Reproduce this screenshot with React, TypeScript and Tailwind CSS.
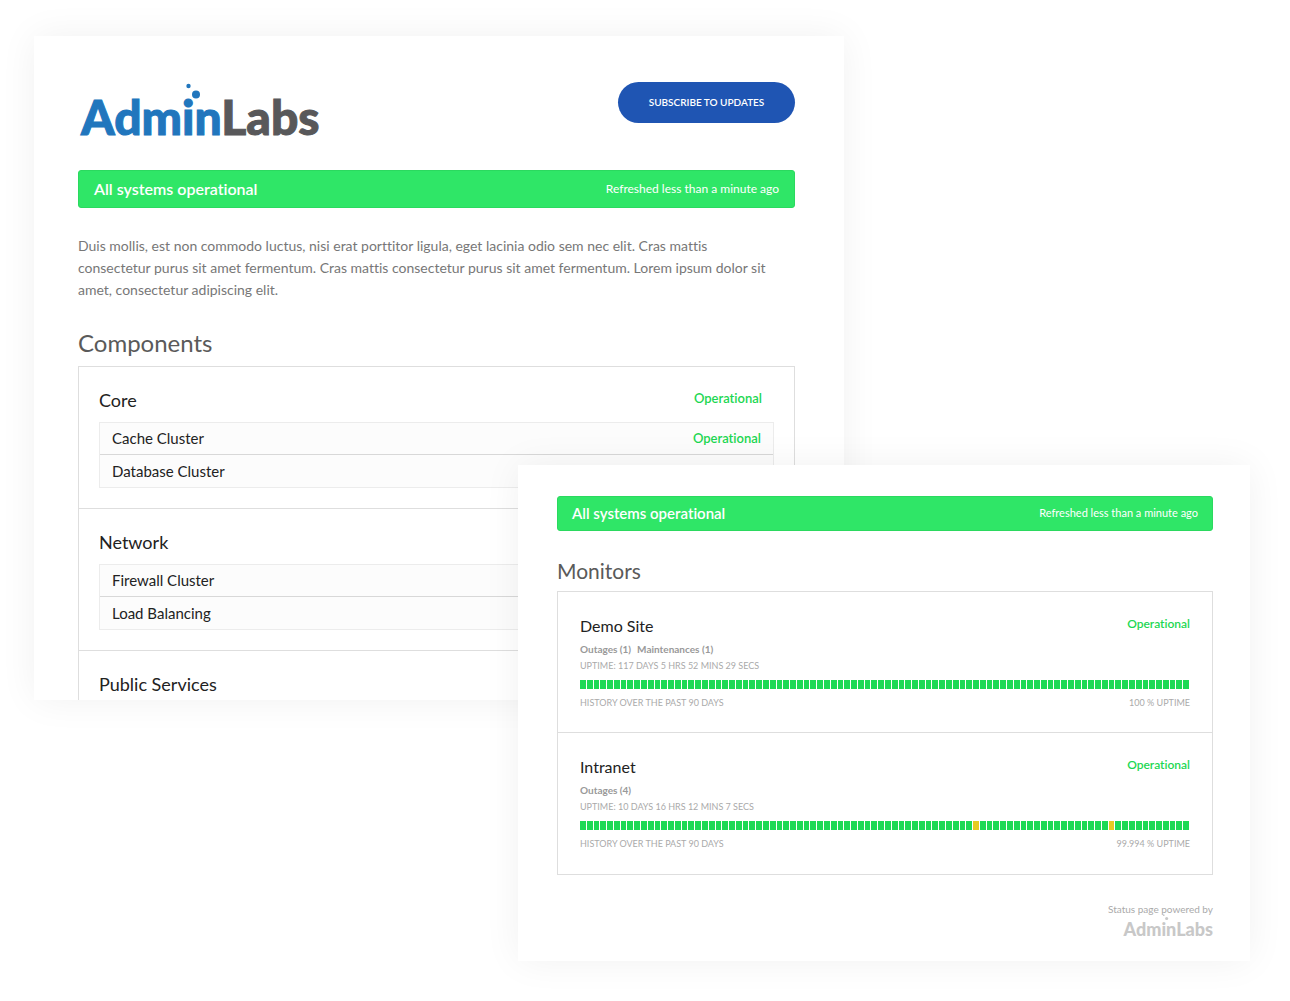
import clsx from "clsx";

const COMPONENT_GROUPS = [
  {
    name: "Core",
    status: "Operational",
    items: [
      { name: "Cache Cluster", status: "Operational" },
      { name: "Database Cluster", status: "Operational" },
    ],
  },
  {
    name: "Network",
    status: "Operational",
    items: [
      { name: "Firewall Cluster", status: "Operational" },
      { name: "Load Balancing", status: "Operational" },
    ],
  },
  {
    name: "Public Services",
    status: "Operational",
    items: [],
  },
];

// warnings = indexes of the days with a degraded state
const MONITORS = [
  {
    name: "Demo Site",
    events: ["Outages (1)", "Maintenances (1)"],
    uptime: "Uptime: 117 days 5 hrs 52 mins 29 secs",
    percent: "100 % uptime",
    warnings: [] as number[],
  },
  {
    name: "Intranet",
    events: ["Outages (4)"],
    uptime: "Uptime: 10 days 16 hrs 12 mins 7 secs",
    percent: "99.994 % uptime",
    warnings: [58, 78],
  },
];

const DAYS = Array.from({ length: 90 }, (_, i) => i);

function Logo({ small = false }: { small?: boolean }) {
  return (
    <span
      className={clsx(
        "relative inline-block font-black whitespace-nowrap",
        small
          ? "text-[18px] leading-[24px] text-[#c8c8c8]"
          : "text-[48px] leading-[56px] text-[#2176bd] [-webkit-text-stroke:1px]"
      )}
    >
      Admin
      <span className={small ? "" : "text-[#58585a]"}>Labs</span>
      {/* bubbles over the "i" */}
      <svg
        viewBox="0 0 18 18"
        fill="currentColor"
        className={clsx(
          "absolute",
          small ? "left-[38px] -top-[3px] size-[7px]" : "left-[103px] -top-[6px] size-[18px]"
        )}
      >
        <circle cx="4.500" cy="3" r="2.200" />
        <circle cx="12" cy="11.500" r="4" />
      </svg>
    </span>
  );
}

function StatusBanner({ small = false }: { small?: boolean }) {
  return (
    <div
      className={clsx(
        "flex items-center justify-between rounded-[3px] border border-[#2bd95f] bg-[#2fe667] text-white",
        small ? "h-[35px] px-[14px]" : "h-[38px] px-[15px]"
      )}
    >
      <strong className={clsx("font-semibold", small ? "text-[15px]" : "text-[16px]")}>
        All systems operational
      </strong>
      <span className={small ? "text-[11px]" : "text-[12px]"}>
        Refreshed less than a minute ago
      </span>
    </div>
  );
}

function ComponentsCard() {
  return (
    <section className="col-start-1 col-span-2 row-start-1 row-span-2 overflow-hidden bg-white pt-[46px] pr-[49px] pl-[44px]">
      <header className="flex h-[88px] items-start justify-between">
        <div className="pt-[7px] pl-[3px]">
          <Logo />
        </div>
        <button
          type="button"
          className="h-[41px] w-[177px] rounded-full bg-[#1f55b3] text-[10px] font-semibold text-white uppercase"
        >
          Subscribe to updates
        </button>
      </header>

      <StatusBanner />

      <p className="mt-[27px] pr-[20px] text-[14px] leading-[22px] text-[#777]">
        Duis mollis, est non commodo luctus, nisi erat porttitor ligula, eget
        lacinia odio sem nec elit. Cras mattis consectetur purus sit amet
        fermentum. Cras mattis consectetur purus sit amet fermentum. Lorem ipsum
        dolor sit amet, consectetur adipiscing elit.
      </p>

      <h2 className="mt-[27px] mb-[8px] text-[24px] leading-[30px] text-[#5a5a5a]">
        Components
      </h2>

      <div className="divide-y divide-[#dedede] border border-[#dedede]">
        {COMPONENT_GROUPS.map(({ name, status, items }) => (
          <div key={name} className="px-[20px] pt-[21px] pb-[20px]">
            <div className="mb-[10px] flex justify-between pr-[12px]">
              <h3 className="text-[18px] leading-[24px] text-[#222]">{name}</h3>
              <span className="text-[13px] leading-[20px] font-semibold text-[#1cd752]">
                {status}
              </span>
            </div>
            {items.length > 0 && (
              <ul className="divide-y divide-[#d8d8d8] border border-[#ececec] bg-[#fcfcfc]">
                {items.map((item) => (
                  <li
                    key={item.name}
                    className="flex h-[32px] items-center justify-between px-[12px] text-[15px] text-[#222]"
                  >
                    {item.name}
                    <span className="text-[13px] font-semibold text-[#1cd752]">
                      {item.status}
                    </span>
                  </li>
                ))}
              </ul>
            )}
          </div>
        ))}
      </div>
    </section>
  );
}

function MonitorsCard() {
  return (
    <section className="z-10 col-start-2 col-span-2 row-start-2 row-span-2 bg-white pt-[31px] pr-[37px] pb-[20px] pl-[39px] shadow-[0_0_36px_rgba(0,0,0,0.06)]">
      <StatusBanner small />

      <h2 className="mt-[26px] mb-[6px] text-[21px] leading-[28px] text-[#5a5a5a]">
        Monitors
      </h2>

      <div className="divide-y divide-[#dedede] border border-[#dedede]">
        {MONITORS.map(({ name, events, uptime, percent, warnings }) => (
          <div key={name} className="h-[141px] px-[22px] pt-[22px]">
            <div className="flex justify-between">
              <h3 className="text-[16px] leading-[24px] text-[#222]">{name}</h3>
              <span className="text-[12px] leading-[20px] font-semibold text-[#1cd752]">
                Operational
              </span>
            </div>
            <div className="mt-[2px] flex gap-[6px] text-[10px] leading-[18px] font-bold text-[#999]">
              {events.map((event) => (
                <span key={event}>{event}</span>
              ))}
            </div>
            <p className="text-[9px] leading-[16px] text-[#aaa] uppercase">{uptime}</p>
            <div className="mt-[6px] grid h-[9px] grid-cols-[repeat(90,1fr)]">
              {DAYS.map((day) => (
                <div
                  key={day}
                  className={clsx(
                    "border-r border-white",
                    warnings.includes(day) ? "bg-[#e6ca22]" : "bg-[#1cd955]"
                  )}
                />
              ))}
            </div>
            <div className="mt-[7px] flex justify-between text-[9px] leading-[14px] text-[#aaa] uppercase">
              <span>History over the past 90 days</span>
              <span>{percent}</span>
            </div>
          </div>
        ))}
      </div>

      <footer className="mt-[26px] flex flex-col items-end">
        <span className="text-[10px] leading-[16px] text-[#aaa]">
          Status page powered by
        </span>
        <Logo small />
      </footer>
    </section>
  );
}

export default function App() {
  return (
    <main className="grid min-h-screen grid-cols-[484fr_326fr_406fr] grid-rows-[429px_235px_auto] content-start bg-white pt-[36px] pr-[40px] pb-[40px] pl-[34px] font-['Lato',sans-serif] [font-variant-ligatures:none]">
      {/* shadow sits on its own layer of the same grid area */}
      <div className="col-start-1 col-span-2 row-start-1 row-span-2 shadow-[0_0_36px_rgba(0,0,0,0.06)]" />
      <ComponentsCard />
      <MonitorsCard />
    </main>
  );
}
